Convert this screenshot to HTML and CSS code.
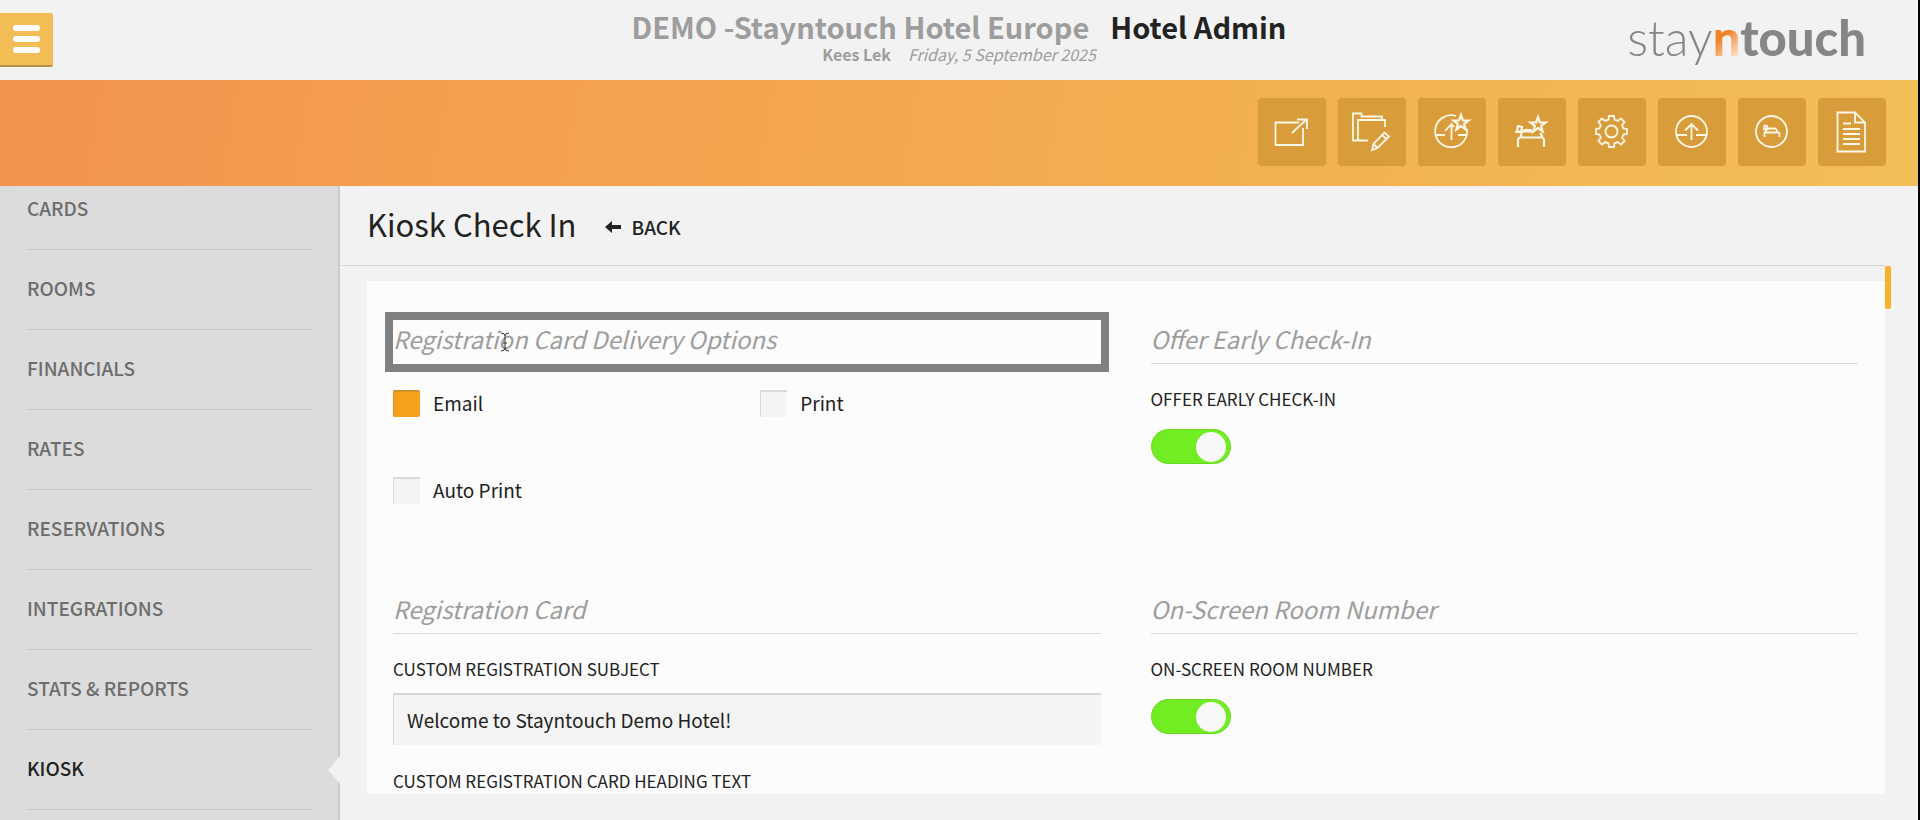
FILE: index.html
```
<!DOCTYPE html>
<html lang="en">
<head>
<meta charset="utf-8">
<title>Kiosk Check In</title>
<link rel="stylesheet" href="styles.css">
</head>
<body>
<div class="app">
  <header class="topbar">
    <button class="menu" type="button" aria-label="Menu"><span class="bar"></span><span class="bar"></span><span class="bar"></span></button>
    <div class="identity">
      <h1 class="hotel"><span class="hotel-name">DEMO -Stayntouch Hotel Europe</span><span>Hotel Admin</span></h1>
      <p class="user"><strong>Kees Lek</strong><em>Friday, 5 September 2025</em></p>
    </div>
    <div class="logo"><span class="logo-light">stay</span><span class="logo-n">n</span><span class="logo-bold">touch</span></div>
  </header>

  <div class="toolbar">
    <button class="tool" type="button" aria-label="Open"><svg class="icon" viewBox="0 0 68 68"><path d="M41 24.500H17.500V47H45V30M34 35L49 21M39 21.500H49V31"/></svg></button>
    <button class="tool" type="button" aria-label="Edit group"><svg class="icon" viewBox="0 0 68 68"><path d="M30 42.500H15V15.500H23.500V18.500H44V22M20 42V22H47V29M34 52L35.500 46L46.500 34.500L51 38.500L39.500 50ZM35.500 46L39.500 50M44 37L48.500 41"/></svg></button>
    <button class="tool" type="button" aria-label="Upsell check in"><svg class="icon" viewBox="0 0 68 68"><path d="M38 18A16 16 0 1 0 49 31M33.500 42V26M27 33L33.500 26L36 29M18 37H27M40 37H49"/><path class="star" transform="translate(43 25)" d="M0-8L1.900-2.600L7.600-2.500L3.100 1L4.700 6.500L0 3.200L-4.700 6.500L-3.100 1L-7.600-2.500L-1.900-2.600Z"/></svg></button>
    <button class="tool" type="button" aria-label="Upsell room"><svg class="icon" viewBox="0 0 68 68"><path class="heavy" d="M20 49V42Q20 39.500 23 39.500H43Q46 39.500 46 42V49M17 34H23M19 33L20 28L24 29L23 34ZM23 39Q23 33.500 26 33.500H34M24 34Q26 31 30 32H34M42 35Q44 37 44 39"/><path class="star" transform="translate(40 27)" d="M0-8L1.900-2.600L7.600-2.500L3.100 1L4.700 6.500L0 3.200L-4.700 6.500L-3.100 1L-7.600-2.500L-1.900-2.600Z"/></svg></button>
    <button class="tool" type="button" aria-label="Settings"><svg class="icon" viewBox="0 0 68 68"><g transform="translate(33.500 33.500)"><path d="M-3-12L-2.500-15.500H2.500L3-12L6.400-10.600L9.500-13.100L13.100-9.500L10.600-6.400L12-3L15.500-2.500V2.500L12 3L10.600 6.400L13.100 9.500L9.500 13.100L6.400 10.600L3 12L2.500 15.500H-2.500L-3 12L-6.400 10.600L-9.500 13.100L-13.100 9.500L-10.600 6.400L-12 3L-15.500 2.500V-2.500L-12-3L-10.600-6.400L-13.100-9.500L-9.500-13.100L-6.400-10.600Z"/><circle r="6"/></g></svg></button>
    <button class="tool" type="button" aria-label="Check in"><svg class="icon" viewBox="0 0 68 68"><circle cx="33.500" cy="33.500" r="15.500"/><path d="M33.500 42V26M27 32.500L33.500 26L40 32.500M18 37H29M38 37H49"/></svg></button>
    <button class="tool" type="button" aria-label="Rooms"><svg class="icon" viewBox="0 0 68 68"><circle cx="33.500" cy="33.500" r="15.500"/><path d="M26.500 39V34.500H40Q41.500 34.500 41.500 36V39M26 31L26.500 27.500L29 28L28.500 31ZM27 33.500L30 30.500H37Q39 31 39 34"/></svg></button>
    <button class="tool" type="button" aria-label="Reports"><svg class="icon" viewBox="0 0 68 68"><path d="M19.500 14.500H37L47 24.500V53.500H19.500ZM37 14.500V24.500H47M25 25.500H33M25 31H42M25 36H42M25 41H42M25 46H42"/></svg></button>
  </div>

  <div class="body">
    <nav class="sidebar">
      <a class="nav-item" href="#cards">CARDS</a>
      <a class="nav-item" href="#rooms">ROOMS</a>
      <a class="nav-item" href="#financials">FINANCIALS</a>
      <a class="nav-item" href="#rates">RATES</a>
      <a class="nav-item" href="#reservations">RESERVATIONS</a>
      <a class="nav-item" href="#integrations">INTEGRATIONS</a>
      <a class="nav-item" href="#stats">STATS &amp; REPORTS</a>
      <a class="nav-item current" href="#kiosk">KIOSK</a>
    </nav>

    <main class="main">
      <div class="page-head">
        <h2 class="page-title">Kiosk Check In</h2>
        <a class="back" href="#back"><svg class="back-arrow" viewBox="0 0 16 12"><path d="M0 6L7 0V4H16V8H7V12Z"/></svg>BACK</a>
      </div>
      <div class="scroller">
        <form class="panel">
          <section class="section">
            <h3 class="section-title focused">Registration Card Delivery Options
              <svg class="cursor" viewBox="0 0 10 20"><path d="M1 1Q5 1 5 4Q5 1 9 1M5 4V16M1 19Q5 19 5 16Q5 19 9 19M3 11H7"/></svg>
            </h3>
            <div class="checks">
              <label class="check"><input type="checkbox" checked>Email</label>
              <label class="check"><input type="checkbox">Print</label>
              <label class="check"><input type="checkbox">Auto Print</label>
            </div>
          </section>
          <section class="section">
            <h3 class="section-title">Offer Early Check-In</h3>
            <label class="label" for="early">OFFER EARLY CHECK-IN</label>
            <input class="toggle" id="early" type="checkbox" checked>
          </section>
          <section class="section">
            <h3 class="section-title">Registration Card</h3>
            <label class="label" for="subject">CUSTOM REGISTRATION SUBJECT</label>
            <input class="text" id="subject" type="text" value="Welcome to Stayntouch Demo Hotel!">
            <span class="label">CUSTOM REGISTRATION CARD HEADING TEXT</span>
          </section>
          <section class="section">
            <h3 class="section-title">On-Screen Room Number</h3>
            <label class="label" for="roomno">ON-SCREEN ROOM NUMBER</label>
            <input class="toggle" id="roomno" type="checkbox" checked>
          </section>
        </form>
        <div class="scroll-thumb"></div>
      </div>
    </main>
  </div>
</div>
</body>
</html>
```
FILE: styles.css
```
* { box-sizing: border-box; }

body {
  margin: 0;
  background: #f2f2f2;
  color: #222;
  font-family: "Noto Sans CJK SC", "Noto Sans", sans-serif;
  font-size: 19px;
  line-height: 24px;
}

h1, h2, h3, p { margin: 0; font-weight: 400; }
button { border: 0; padding: 0; cursor: pointer; }
a { color: inherit; text-decoration: none; }

.app {
  display: flex;
  flex-direction: column;
  height: 100vh;
  overflow: hidden;
  border-right: 2px solid #000;
}

/* Top bar */
.topbar {
  display: grid;
  grid-template-columns: 1fr auto 1fr;
  align-items: start;
  flex: none;
  height: 80px;
}

.menu {
  display: flex;
  flex-direction: column;
  align-items: center;
  justify-content: center;
  gap: 5px;
  width: 53px;
  height: 54px;
  margin-top: 13px;
  background: #f2bd55;
  border-bottom: 2px solid #b8924a;
  border-radius: 0 2px 2px 0;
}
.bar { width: 27px; height: 6px; border-radius: 3px; background: #fff; }

.identity { padding-top: 10px; text-align: center; color: #9d9d9d; }
.hotel {
  display: flex;
  gap: 21px;
  font-size: 29px;
  font-weight: 700;
  line-height: 32px;
  color: #222;
}
.hotel-name { color: #9d9d9d; }
.user {
  display: flex;
  justify-content: center;
  gap: 17px;
  font-size: 16px;
}

.logo {
  justify-self: end;
  padding: 12px 52px 0 0;
  font-family: Lato, sans-serif;
  font-size: 49px;
  line-height: 50px;
  color: #868686;
}
.logo-light { font-weight: 300; }
.logo-bold, .logo-n { font-weight: 900; }
.logo-n {
  background: linear-gradient(140deg, #f08228 45%, #fbe3cd 85%);
  background-clip: text;
  -webkit-background-clip: text;
  color: transparent;
}

/* Toolbar */
.toolbar {
  display: flex;
  justify-content: flex-end;
  align-items: flex-start;
  gap: 12px;
  flex: none;
  height: 106px;
  padding: 18px 32px 0 0;
  background: linear-gradient(100deg, #f2924f, #f4a04e 25%, #f3b050 65%, #f3be57);
}
.tool {
  width: 68px;
  height: 68px;
  border-radius: 4px;
  background: #d99c3b;
}
.icon {
  display: block;
  width: 68px;
  height: 68px;
  fill: none;
  stroke: #fff8e8;
  stroke-width: 1.8;
}
.star, .heavy { stroke-width: 2.2; }

/* Sidebar */
.body { display: flex; flex: 1; min-height: 0; }
.sidebar {
  flex: none;
  width: 340px;
  padding: 0 25px 0 27px;
  background: #dcdcdc;
  border-right: 2px solid #cbcbcb;
}
.nav-item {
  position: relative;
  display: flex;
  align-items: center;
  height: 80px;
  padding-bottom: 3px;
  border-bottom: 1px solid #c4c4c4;
  color: #6d6d6d;
  font-weight: 500;
}
.nav-item:first-child { margin-top: -16px; }
.nav-item.current { color: #222; }
.nav-item.current::after {
  content: "";
  position: absolute;
  right: -27px;
  top: 26px;
  border: solid transparent;
  border-width: 14px 12px 14px 0;
  border-right-color: #f2f2f2;
}

/* Main */
.main {
  display: flex;
  flex-direction: column;
  flex: 1;
  min-width: 0;
  padding-bottom: 26px;
}
.page-head {
  display: flex;
  align-items: center;
  gap: 28px;
  flex: none;
  height: 80px;
  margin-right: 33px;
  padding: 0 0 4px 27px;
  border-bottom: 1px solid #d8d8d8;
}
.page-title { font-size: 31px; line-height: 40px; }
.back {
  display: flex;
  align-items: center;
  gap: 11px;
  padding-top: 6px;
  font-weight: 500;
}
.back-arrow { width: 16px; height: 12px; fill: #222; }

.scroller { position: relative; flex: 1; min-height: 0; padding: 15px 33px 0 27px; }
.scroll-thumb {
  position: absolute;
  top: 0;
  right: 27px;
  width: 6px;
  height: 43px;
  border-radius: 2px;
  background: #f8b32d;
}
.panel {
  display: grid;
  grid-template-columns: 1fr 1fr;
  grid-auto-rows: minmax(270px, auto);
  align-content: start;
  column-gap: 50px;
  height: 100%;
  overflow: hidden;
  padding: 39px 27px 0 26px;
  background: #fcfcfc;
}
.section { display: flex; flex-direction: column; align-items: flex-start; }
.section-title {
  position: relative;
  width: 100%;
  margin-bottom: 23px;
  padding-bottom: 6px;
  border-bottom: 1px solid #dadada;
  color: #9d9d9d;
  font-size: 24px;
  font-style: italic;
  line-height: 37px;
}
.section-title.focused { outline: 8px solid #7f8081; border-color: transparent; }
.cursor {
  position: absolute;
  left: 107px;
  top: 12px;
  width: 10px;
  height: 20px;
  fill: none;
  stroke: #333;
}
.checks {
  display: grid;
  grid-template-columns: 1fr 1fr;
  gap: 59px 27px;
  width: 100%;
  padding-top: 2px;
}
.check { display: flex; align-items: center; gap: 13px; height: 28px; }
.check input {
  appearance: none;
  width: 27px;
  height: 27px;
  margin: 0;
  border: solid #d9d9d9;
  border-width: 2px 0 0 1px;
  background: #f4f4f4;
}
.check input:checked { background: #f7a01c; border-color: #d68f22; border-radius: 2px; }
.label { font-size: 17px; }
.toggle {
  appearance: none;
  width: 80px;
  height: 35px;
  margin: 18px 0 0;
  padding: 2px 4px;
  border: 1px solid #66d824;
  border-radius: 18px;
  background: #72ed24;
}
.toggle::before {
  content: "";
  display: block;
  width: 30px;
  height: 30px;
  margin-left: auto;
  border-radius: 50%;
  background: #f8f8f8;
}
.text {
  width: 100%;
  height: 52px;
  margin: 12px 0 24px;
  padding: 0 13px 2px;
  border: solid #d5d5d5;
  border-width: 2px 0 0 1px;
  background: #f4f4f4;
  color: #222;
  font: inherit;
}
```
